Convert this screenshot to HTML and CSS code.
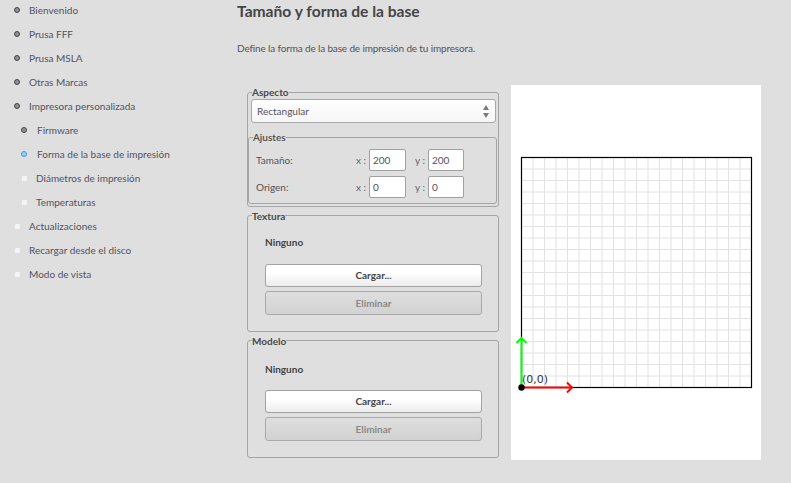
FILE: index.html
```html
<!DOCTYPE html>
<html lang="es">
<head>
<meta charset="utf-8">
<title>Tamaño y forma de la base</title>
<link rel="stylesheet" href="styles.css">
</head>
<body>
<div class="app">
  <nav class="sidebar">
    <ul class="steps">
      <li class="step done"><span class="dot"></span>Bienvenido</li>
      <li class="step done"><span class="dot"></span>Prusa FFF</li>
      <li class="step done"><span class="dot"></span>Prusa MSLA</li>
      <li class="step done"><span class="dot"></span>Otras Marcas</li>
      <li class="step done"><span class="dot"></span>Impresora personalizada</li>
      <li class="step sub done"><span class="dot"></span>Firmware</li>
      <li class="step sub current"><span class="dot"></span>Forma de la base de impresión</li>
      <li class="step sub todo"><span class="dot"></span>Diámetros de impresión</li>
      <li class="step sub todo"><span class="dot"></span>Temperaturas</li>
      <li class="step todo"><span class="dot"></span>Actualizaciones</li>
      <li class="step todo"><span class="dot"></span>Recargar desde el disco</li>
      <li class="step todo"><span class="dot"></span>Modo de vista</li>
    </ul>
  </nav>
  <main class="main">
    <h1 class="title">Tamaño y forma de la base</h1>
    <p class="desc">Define la forma de la base de impresión de tu impresora.</p>
    <div class="content">
      <div class="controls">
        <fieldset class="group aspect">
          <legend>Aspecto</legend>
          <div class="select">
            <span>Rectangular</span>
            <span class="spin"><span class="up"></span><span class="down"></span></span>
          </div>
          <fieldset class="group settings">
            <legend>Ajustes</legend>
            <div class="settings-body">
              <div class="row">
                <span class="lbl">Tamaño:</span>
                <span class="axis ax">x :</span><span class="input">200</span>
                <span class="axis ay">y :</span><span class="input iy">200</span>
              </div>
              <div class="row">
                <span class="lbl">Origen:</span>
                <span class="axis ax">x :</span><span class="input">0</span>
                <span class="axis ay">y :</span><span class="input iy">0</span>
              </div>
            </div>
          </fieldset>
        </fieldset>
        <fieldset class="group file texture">
          <legend>Textura</legend>
          <div class="file-body">
            <div class="none">Ninguno</div>
            <button class="btn">Cargar...</button>
            <button class="btn disabled">Eliminar</button>
          </div>
        </fieldset>
        <fieldset class="group file model">
          <legend>Modelo</legend>
          <div class="file-body">
            <div class="none">Ninguno</div>
            <button class="btn">Cargar...</button>
            <button class="btn disabled">Eliminar</button>
          </div>
        </fieldset>
      </div>
      <div class="preview">
        <svg width="250" height="375" viewBox="0 0 250 375">
          <g class="grid" stroke="#e2e2e2" stroke-width="1">
            <path d="M22 72.5V302.5M33.5 72.5V302.5M45 72.5V302.5M56.5 72.5V302.5M68 72.5V302.5M79.5 72.5V302.5M91 72.5V302.5M102.5 72.5V302.5M114 72.5V302.5M125.5 72.5V302.5M137 72.5V302.5M148.5 72.5V302.5M160 72.5V302.5M171.5 72.5V302.5M183 72.5V302.5M194.5 72.5V302.5M206 72.5V302.5M217.5 72.5V302.5M229 72.5V302.5"/>
            <path d="M10.5 84H240.5M10.5 95.5H240.5M10.5 107H240.5M10.5 118.5H240.5M10.5 130H240.5M10.5 141.5H240.5M10.5 153H240.5M10.5 164.5H240.5M10.5 176H240.5M10.5 187.5H240.5M10.5 199H240.5M10.5 210.5H240.5M10.5 222H240.5M10.5 233.5H240.5M10.5 245H240.5M10.5 256.5H240.5M10.5 268H240.5M10.5 279.5H240.5M10.5 291H240.5"/>
          </g>
          <rect x="10.5" y="72.5" width="230" height="230" fill="none" stroke="#000" stroke-width="1.2"/>
          <g fill="none" stroke-width="2" stroke-linecap="butt">
            <path d="M10.5 302.5V253" stroke="#00ff00"/>
            <path d="M5.5 258L10.5 253L15.5 258" stroke="#00ff00"/>
            <path d="M10.5 302.5H61" stroke="#ff0000"/>
            <path d="M56 297.5L61 302.5L56 307.5" stroke="#ff0000"/>
          </g>
          <circle cx="10.5" cy="302.5" r="3.2" fill="#000"/>
          <text x="11" y="298" class="origin">(0,0)</text>
        </svg>
      </div>
    </div>
  </main>
</div>
</body>
</html>
```

FILE: styles.css
```css
* { box-sizing: border-box; }
html, body { margin: 0; padding: 0; }
body {
  background: #dfdfdf;
  font-family: Lato, "Open Sans", sans-serif;
  font-size: 10px;
  color: #525260;
  width: 791px;
  height: 483px;
  overflow: hidden;
}
.app { display: flex; }
.sidebar { width: 237px; flex: none; }
.steps { list-style: none; margin: 0; padding: 0; }
.step {
  display: flex;
  align-items: center;
  height: 20px;
  margin-bottom: 4px;
  padding-left: 14px;
  white-space: nowrap;
}
.step.sub { padding-left: 21px; }
.dot {
  width: 6px;
  height: 6px;
  border-radius: 50%;
  margin-right: 9px;
  flex: none;
}
.step.sub .dot { margin-right: 10px; }
.done .dot { background: #8e8e8e; border: 1.5px solid #474747; }
.current .dot { background: #9fd0f7; border: 1.5px solid #3a95e6; }
.todo .dot { background: #f4f4f4; border-radius: 1px; width: 5px; height: 5px; margin-left: 1px; }
.step.todo .dot { margin-right: 9px; }

.main { flex: 1; }
.title {
  margin: 2px 0 0;
  font-size: 15.6px;
  line-height: 19px;
  font-weight: 700;
  color: #454545;
}
.desc {
  margin: 20px 0 0;
  line-height: 14px;
  letter-spacing: -0.15px;
}
.content {
  display: flex;
  align-items: flex-start;
  margin: 30px 0 0 10px;
  gap: 12px;
}
.controls { width: 252px; display: flex; flex-direction: column; gap: 2px; }
.group {
  margin: 0;
  padding: 0;
  border: 1px solid #a5a5a5;
  border-radius: 3px;
  min-width: 0;
}
.group legend {
  margin-left: 4px;
  padding: 0;
  font-weight: 700;
  line-height: 14px;
  color: #4a4a4a;
}
.aspect { padding: 0 1px 2px 0; }
.select {
  margin: 0 1px 0 3px;
  height: 24px;
  background: linear-gradient(#ffffff, #f6f6f6);
  border: 1px solid #a8a8a8;
  border-radius: 3px;
  display: flex;
  align-items: center;
  justify-content: space-between;
  padding: 0 6px 0 5px;
}
.spin { display: flex; flex-direction: column; gap: 3px; }
.up, .down { width: 0; height: 0; border-left: 3px solid transparent; border-right: 3px solid transparent; }
.up { border-bottom: 5px solid #7a7a7a; }
.down { border-top: 5px solid #7a7a7a; }
.settings { margin-top: 7px; }
.settings legend { font-weight: 600; }
.settings-body { padding: 5px 0 5px 7px; }
.row { display: flex; align-items: center; height: 22px; }
.row + .row { margin-top: 4.5px; }
.lbl { width: 98px; }
.axis { text-align: right; padding-right: 3px; color: #62626e; }
.ax { width: 15px; }
.ay { width: 22px; }
.input {
  width: 37px;
  height: 22px;
  background: #fff;
  border: 1px solid #a0a0a0;
  border-radius: 2px;
  padding-left: 3px;
  line-height: 20px;
  color: #525260;
}
.input.iy { width: 36px; }
.file-body { padding: 13px 16px 16px 17px; display: flex; flex-direction: column; }
.model .file-body { padding-top: 15px; }
.none { font-weight: 700; line-height: 12px; color: #444; margin-bottom: 16px; }
.model .none { margin-bottom: 15px; }
.btn {
  font-family: inherit;
  font-size: 10px;
  font-weight: 700;
  height: 23.5px;
  border: 1px solid #a2a2a2;
  border-radius: 3px;
  background: linear-gradient(#ffffff 40%, #ececec);
  color: #444;
  padding: 0;
}
.btn + .btn { margin-top: 4px; }
.btn.disabled {
  background: linear-gradient(#dedede, #d2d2d2);
  color: #8a8a8a;
  border-color: #aaaaaa;
}
.preview { width: 250px; height: 375px; background: #fff; flex: none; }
.preview svg { display: block; }
.origin { font-family: "DejaVu Sans", sans-serif; font-size: 11px; fill: #333; }
```
